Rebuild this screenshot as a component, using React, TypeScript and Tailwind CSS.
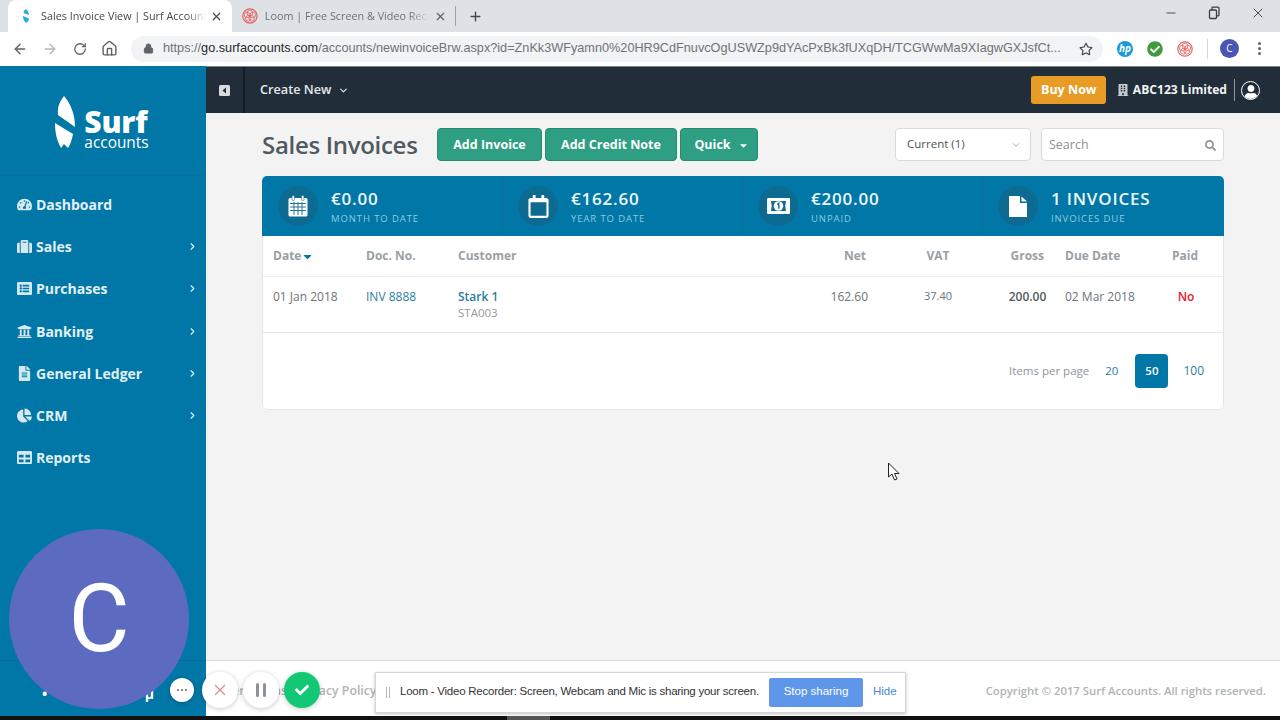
import type { ReactNode } from "react";
import {
  FaTachometerAlt,
  FaSuitcase,
  FaListAlt,
  FaUniversity,
  FaFileAlt,
  FaChartPie,
  FaTable,
  FaRegCalendar,
  FaSearch,
  FaRegStar,
  FaBuilding,
  FaCheck,
  FaCheckCircle,
  FaCaretDown,
  FaUser,
} from "react-icons/fa";
import {
  ArrowLeft,
  ArrowRight,
  RotateCw,
  Home,
  Lock,
  X,
  Plus,
  Minus,
  ChevronRight,
  ChevronDown,
} from "lucide-react";

const navItems: { label: string; icon: ReactNode; sub?: boolean }[] = [
  { label: "Dashboard", icon: <FaTachometerAlt /> },
  { label: "Sales", icon: <FaSuitcase />, sub: true },
  { label: "Purchases", icon: <FaListAlt />, sub: true },
  { label: "Banking", icon: <FaUniversity />, sub: true },
  { label: "General Ledger", icon: <FaFileAlt />, sub: true },
  { label: "CRM", icon: <FaChartPie />, sub: true },
  { label: "Reports", icon: <FaTable /> },
];

function CalendarGrid() {
  return (
    <svg width="20" height="22" viewBox="0 0 20 22">
      <rect x="0.500" y="3" width="19" height="18.500" rx="1.500" fill="#fff" />
      <rect x="4" y="0.500" width="2.500" height="5" rx="1" fill="#fff" stroke="#0d6a90" strokeWidth="0.600" />
      <rect x="13.500" y="0.500" width="2.500" height="5" rx="1" fill="#fff" stroke="#0d6a90" strokeWidth="0.600" />
      <path
        d="M2 8.500 H18 M2 12 H18 M2 15.500 H18 M6 7 V20 M10 7 V20 M14 7 V20"
        stroke="#0d6a90"
        strokeWidth="0.900"
      />
    </svg>
  );
}

function MoneyIcon() {
  return (
    <svg width="23" height="16" viewBox="0 0 23 16">
      <rect width="23" height="16" rx="1" fill="#fff" />
      <path d="M4 3 H19 Q17.500 8 19 13 H4 Q5.500 8 4 3Z" fill="#0d6a90" />
      <circle cx="11.500" cy="8" r="4.800" fill="#fff" />
      <path d="M10.300 6.500 L11.800 5.400 V10.800" fill="none" stroke="#0d6a90" strokeWidth="1.400" />
    </svg>
  );
}

function FileIcon() {
  return (
    <svg width="18" height="21" viewBox="0 0 18 21" fill="#fff">
      <path d="M0 0 H11 V7 H18 V21 H0Z" />
      <path d="M12.500 0.500 L18 5.500 H12.500Z" />
    </svg>
  );
}

const stats = [
  { value: "€0.00", label: "MONTH TO DATE", icon: <CalendarGrid /> },
  { value: "€162.60", label: "YEAR TO DATE", icon: <FaRegCalendar className="text-[23px]" /> },
  { value: "€200.00", label: "UNPAID", icon: <MoneyIcon /> },
  { value: "1 INVOICES", label: "INVOICES DUE", icon: <FileIcon /> },
];

const rowCols = "grid grid-cols-[93px_92px_342px_68px_140px_39px_125px_26px] pl-[10px]";

function LoomMark({ size = 16 }: { size?: number }) {
  return (
    <svg width={size} height={size} viewBox="0 0 16 16" fill="none" stroke="#e8635e" strokeWidth="0.800">
      <circle cx="8" cy="8" r="7.200" strokeWidth="1.200" />
      {[0, 72, 144, 216, 288].map((deg) => (
        <circle key={deg} cx="8" cy="5" r="2.800" transform={`rotate(${deg} 8 8)`} />
      ))}
    </svg>
  );
}

function BrowserChrome() {
  return (
    <div className="shrink-0 font-['Open_Sans',sans-serif] text-[#5f6368]">
      <div className="flex h-8 items-end bg-[#dee1e6]">
        <div className="ml-2 flex h-8 w-[224px] items-center rounded-t-lg bg-white pl-[14px] pr-[9px]">
          <svg width="8" height="14" viewBox="0 0 8 14" fill="#29abe2">
            <path d="M4 0 C6 2 7 4 7 6 L1.500 4 C1.500 2.500 2.500 1 4 0Z M1 7 L7 9.500 C7 11 6 13 4 14 C2 12 1 10 1 7Z" />
          </svg>
          <span className="ml-[11px] w-[165px] overflow-hidden whitespace-nowrap text-[10.800px] text-[#45494d] [mask-image:linear-gradient(to_right,black_88%,transparent)]">
            Sales Invoice View | Surf Accounts
          </span>
          <X size={13} strokeWidth={2.2} className="ml-auto text-[#45494d]" />
        </div>
        <div className="flex h-8 w-[224px] items-center pl-[10px]">
          <LoomMark />
          <span className="ml-[7px] w-[166px] overflow-hidden whitespace-nowrap text-[10.800px] text-[#6e7175] [mask-image:linear-gradient(to_right,black_88%,transparent)]">
            Loom | Free Screen &amp; Video Recording
          </span>
          <X size={13} strokeWidth={2.2} className="ml-[5px] text-[#5f6368]" />
          <div className="ml-[8px] h-5 w-px bg-[#9ea1a5]" />
        </div>
        <div className="flex h-8 items-center pl-[12px]">
          <Plus size={15} strokeWidth={2.2} className="text-[#45494d]" />
        </div>
        <div className="ml-auto mb-[11px] flex items-center gap-[29px] pr-[14px] text-[#3c3f42]">
          <Minus size={14} strokeWidth={1.5} />
          <svg width="14" height="14" viewBox="0 0 14 14" fill="none" stroke="currentColor" strokeWidth="1.300">
            <rect x="2.500" y="4" width="7" height="8.500" rx="1" />
            <path d="M5 4 V2 a.8 .8 0 0 1 .8 -.8 H11 a1 1 0 0 1 1 1 V9 a.8 .8 0 0 1 -.8 .8 H9.500" />
          </svg>
          <X size={16} strokeWidth={1.4} />
        </div>
      </div>
      <div className="flex h-[34px] items-center bg-white pb-px">
        <div className="flex w-[131px] items-center pl-[12px] text-[#5f6368]">
          <ArrowLeft size={16} strokeWidth={2.2} />
          <ArrowRight size={16} strokeWidth={2} className="ml-[14px] text-[#b4b6b9]" />
          <RotateCw size={14} strokeWidth={2.2} className="ml-[15px]" />
          <Home size={17} strokeWidth={2} className="ml-[14px]" />
        </div>
        <div className="flex h-[26px] w-[972px] items-center rounded-full bg-[#f1f3f4] pl-[12px] pr-[10px]">
          <Lock size={11} fill="#5f6368" strokeWidth={2} />
          <span className="ml-[9px] whitespace-nowrap pt-px font-['Liberation_Sans',sans-serif] text-[12.700px] text-[#6f7276]">
            https://<span className="text-[#26282b]">go.surfaccounts.com</span>
            /accounts/newinvoiceBrw.aspx?id=ZnKk3WFyamn0%20HR9CdFnuvcOgUSWZp9dYAcPxBk3fUXqDH/TCGWwMa9XIagwGXJsfCt...
          </span>
          <FaRegStar className="ml-auto text-[14px] text-[#45494d]" />
        </div>
        <div className="flex items-center pl-[14px]">
          <div className="flex size-4 items-center justify-center rounded-full bg-[#1a9ad6] text-[10px] font-bold italic text-white">
            hp
          </div>
          <FaCheckCircle className="ml-[14px] text-[16px] text-[#3f9b3f]" />
          <div className="ml-[14px]">
            <LoomMark />
          </div>
          <div className="ml-[14px] h-5 w-px bg-[#d4d6d9]" />
          <div className="ml-[12px] flex size-[19px] items-center justify-center rounded-full bg-[#4a55b5] text-[10px] text-white">
            C
          </div>
          <div className="ml-[19px] flex flex-col gap-[2px]">
            <span className="size-[3px] rounded-full bg-[#5f6368]" />
            <span className="size-[3px] rounded-full bg-[#5f6368]" />
            <span className="size-[3px] rounded-full bg-[#5f6368]" />
          </div>
        </div>
      </div>
    </div>
  );
}

function Sidebar() {
  return (
    <aside className="flex w-[206px] shrink-0 flex-col bg-[#0077a6] text-[#e2f0f6]">
      <div className="flex h-[110px] items-start justify-center gap-[7px] border-b border-[#0a6f99] pt-[29px] pr-[3px]">
        <svg width="23" height="54" viewBox="0 0 23 54" fill="#ffffff">
          <path d="M10 1 C16 8 21 18 21 32 L4 20 C3 12 6 6 10 1Z" />
          <path d="M1 28 L19 39 C18 45 16 50 14 53 L10 49 L7 53 C3 46 1 38 1 28Z" />
        </svg>
        <div className="mt-[15px] flex flex-col text-white">
          <span className="text-[30px] font-extrabold leading-[24px] tracking-[-0.2px]">Surf</span>
          <span className="mt-[2px] text-[15.400px] leading-[14px]">accounts</span>
        </div>
      </div>
      <nav className="pt-[7.400px]">
        {navItems.map((item) => (
          <div key={item.label} className="flex h-[42.2px] items-center pl-[17px] pr-[8px] text-[14px] font-bold">
            <span className="flex w-[19px] text-[15px] text-[#d6e9f1]">{item.icon}</span>
            <span>{item.label}</span>
            {item.sub && <ChevronRight size={11} strokeWidth={2.5} className="ml-auto" />}
          </div>
        ))}
      </nav>
      <div className="mt-auto flex h-[56px] items-center justify-between border-t border-[#0a6a92] pl-[42px] pr-[52px] pt-[10px] text-[14px] font-bold text-white">
        <span>•</span>
        <span>μ</span>
      </div>
    </aside>
  );
}

function TopBar() {
  return (
    <header className="flex h-[47px] shrink-0 items-center border-t border-[#7a8288] bg-[#212d39] text-white">
      <div className="flex h-full w-[39px] items-center justify-center border-r-2 border-[#141c24]">
        <svg width="11" height="11" viewBox="0 0 11 11">
          <rect width="11" height="11" rx="1.500" fill="#d8dcdf" />
          <path d="M7 2.500 V8.500 L3.500 5.500Z" fill="#212d39" />
        </svg>
      </div>
      <span className="ml-[15px] text-[12.700px] font-semibold text-[#e6e9eb]">Create New</span>
      <ChevronDown size={11} strokeWidth={2.5} className="ml-[7px] text-[#e6e9eb]" />
      <button className="ml-auto h-7 w-[75px] rounded-[3px] bg-[#e89c26] text-[12.500px] font-bold text-white">
        Buy Now
      </button>
      <FaBuilding className="ml-[11px] text-[12px] text-[#c4cace]" />
      <span className="ml-[3.500px] text-[12.100px] font-bold text-[#f1f3f4]">ABC123 Limited</span>
      <div className="ml-[7px] h-[22px] w-px bg-[#8e969c]" />
      <div className="ml-[6px] mr-[20px] flex size-[19px] items-end justify-center overflow-hidden rounded-full border border-white">
        <FaUser className="text-[14px]" />
      </div>
    </header>
  );
}

function Toolbar() {
  const green =
    "flex h-[33px] items-center justify-center rounded-[4px] border border-[#258a70] bg-[#2e9f82] pt-px text-[12.500px] font-bold text-white";
  return (
    <div className="flex h-[33px] items-center">
      <h1 className="w-[175px] text-[24px] font-semibold tracking-[-0.3px] text-[#4f5a61]">Sales Invoices</h1>
      <button className={`${green} w-[105px]`}>Add Invoice</button>
      <button className={`${green} ml-[3px] w-[132px]`}>Add Credit Note</button>
      <button className={`${green} ml-[3px] w-[78px] gap-[7px] pl-[5px]`}>
        Quick <FaCaretDown className="text-[11px]" />
      </button>
      <div className="ml-auto flex h-[33px] w-[136px] items-center justify-between rounded-[4px] border border-[#d9dcde] bg-white pb-[2px] pl-[11px] pr-[9px] text-[11.500px] text-[#4c5359]">
        Current (1)
        <ChevronDown size={10} className="mt-[2px] text-[#9aa1a6]" />
      </div>
      <div className="ml-[10px] flex h-[33px] w-[183px] items-center justify-between rounded-[4px] border border-[#d9dcde] bg-white pl-[7px] pr-[7px] pt-px text-[12.500px] text-[#8b9297]">
        Search
        <FaSearch className="text-[11px] text-[#8f969b]" />
      </div>
    </div>
  );
}

function InvoiceCard() {
  return (
    <div className="mt-[15px] overflow-hidden rounded-[5px] bg-white">
      <div className="grid h-[60px] grid-cols-[240px_240px_240px_1fr] bg-[#0077a6]">
        {stats.map((s, i) => (
          <div key={s.label} className={`flex items-center ${i > 0 ? "border-l border-[#0a6f99] pl-[15px]" : "pl-[16px]"}`}>
            <div className="flex size-10 items-center justify-center rounded-full bg-[#0d6a90] text-white">{s.icon}</div>
            <div className="ml-[13px] flex flex-col pt-[2px]">
              <span className="text-[17px] font-semibold leading-[20px] tracking-[0.8px] text-[#eef7fa]">{s.value}</span>
              <span className="mt-[4px] text-[9.500px] leading-[12px] tracking-[0.9px] text-[#8ccbe2]">{s.label}</span>
            </div>
          </div>
        ))}
      </div>
      <div className="rounded-b-[5px] border border-t-0 border-[#e3e4e5]">
        <div className={`${rowCols} h-[41px] items-center border-b border-[#ececec] text-[12px] font-bold text-[#9a9fa3]`}>
          <span className="flex items-center">
            Date <FaCaretDown className="text-[13px] text-[#0077a6]" />
          </span>
          <span>Doc. No.</span>
          <span>Customer</span>
          <span className="pr-[2px] text-right">Net</span>
          <span className="text-center">VAT</span>
          <span className="pr-[3px] text-right">Gross</span>
          <span className="pl-[18px]">Due Date</span>
          <span className="text-center">Paid</span>
        </div>
        <div className={`${rowCols} h-[56px] border-b border-[#e6e6e6] pt-[12px] text-[12px] leading-[15px] text-[#6d7377]`}>
          <span>01 Jan 2018</span>
          <span className="text-[#2a7ea3]">INV 8888</span>
          <div className="flex flex-col">
            <span className="font-semibold text-[#2a7ea3]">Stark 1</span>
            <span className="mt-px text-[11.500px] text-[#94999d]">STA003</span>
          </div>
          <span className="text-right">162.60</span>
          <span className="-mt-px text-center text-[11px]">37.40</span>
          <span className="whitespace-nowrap text-center font-semibold text-[#54595d]">200.00</span>
          <span className="pl-[18px]">02 Mar 2018</span>
          <span className="pl-[2px] text-center font-semibold text-[#e3202c]">No</span>
        </div>
        <div className="flex h-[76px] items-center justify-end pr-[19px] text-[11.500px] text-[#2a7ea3]">
          <span className="text-[#8e9498]">Items per page</span>
          <span className="ml-[16px]">20</span>
          <span className="ml-[17px] flex h-[34px] w-[33px] items-center justify-center rounded-[4px] bg-[#0077a6] font-semibold text-white">
            50
          </span>
          <span className="ml-[15px] text-[12px]">100</span>
        </div>
      </div>
    </div>
  );
}

function Footer() {
  return (
    <footer className="flex h-[56px] shrink-0 items-center justify-between border-t border-[#dcdcdc] bg-white pl-[11px] pr-[14px] pt-[5px] text-[11.300px] font-semibold text-[#b0b3b5]">
      <div className="flex text-[12.300px]">
        <span className="mr-[2px]">User.</span>
        <span className="mr-[9px]">Terms</span>
        <span>Privacy Policy</span>
      </div>
      <span>Copyright © 2017 Surf Accounts. All rights reserved.</span>
    </footer>
  );
}

// loom recorder overlays
function LoomOverlays() {
  const ctl = "absolute flex items-center justify-center rounded-full shadow-[0_1px_5px_rgba(0,0,0,0.22)]";
  return (
    <>
      <div className="absolute left-[9px] top-[529px] flex size-[180px] items-center justify-center rounded-full bg-[#5c6bc0] font-['Roboto',sans-serif] text-[94px] text-white">
        C
      </div>
      <div className={`${ctl} left-[170px] top-[678px] size-6 bg-white`}>
        <div className="flex gap-[2px]">
          <span className="size-[2px] rounded-full bg-[#666]" />
          <span className="size-[2px] rounded-full bg-[#666]" />
          <span className="size-[2px] rounded-full bg-[#666]" />
        </div>
      </div>
      <div className={`${ctl} left-[202px] top-[672px] size-9 bg-white`}>
        <X size={18} strokeWidth={1.6} className="text-[#e58a8a]" />
      </div>
      <div className={`${ctl} left-[243px] top-[672px] size-9 gap-[4px] bg-white`}>
        <span className="h-[14px] w-[3px] rounded-sm bg-[#8a9297]" />
        <span className="h-[14px] w-[3px] rounded-sm bg-[#8a9297]" />
      </div>
      <div className={`${ctl} left-[284px] top-[672px] size-9 bg-[#12c874]`}>
        <FaCheck className="text-[14px] text-white" />
      </div>

      <div className="absolute left-[375px] top-[672px] flex h-[41px] w-[531px] items-center border border-[#d6d6d6] bg-white pl-[10px] font-['Liberation_Sans',sans-serif] text-[11.500px] shadow-[0_1px_3px_rgba(0,0,0,0.25)]">
        <div className="flex gap-[2px]">
          <span className="h-[11px] w-px bg-[#b5b5b5]" />
          <span className="h-[11px] w-px bg-[#b5b5b5]" />
        </div>
        <span className="ml-[10px] w-[369px] whitespace-nowrap pb-px tracking-[-0.24px] text-[#333]">
          Loom - Video Recorder: Screen, Webcam and Mic is sharing your screen.
        </span>
        <button className="h-[29px] w-[94px] rounded-[2px] bg-[#5e97ea] pb-px text-[11.500px] text-white">Stop sharing</button>
        <span className="ml-[10px] pb-px text-[#4a86e0]">Hide</span>
      </div>

      <svg className="absolute left-[887px] top-[462px]" width="14" height="20" viewBox="0 0 14 20">
        <path d="M1.500 1 V15 L5 12 L7.500 18 L10 17 L7.500 11.500 H12Z" fill="#fff" stroke="#222" strokeWidth="1" />
      </svg>
    </>
  );
}

export default function App() {
  return (
    <div className="relative flex h-[720px] w-[1280px] flex-col overflow-hidden bg-[#f3f3f3] font-['Open_Sans',sans-serif]">
      <BrowserChrome />
      <div className="flex min-h-0 flex-1">
        <Sidebar />
        <div className="flex min-w-0 flex-1 flex-col">
          <TopBar />
          <main className="flex-1 px-[56px] pt-[15px]">
            <Toolbar />
            <InvoiceCard />
          </main>
          <Footer />
        </div>
      </div>
      <div className="flex h-[4px] shrink-0 bg-[#111]">
        <div className="ml-[507px] w-[43px] bg-[#555]" />
      </div>
      <LoomOverlays />
    </div>
  );
}
